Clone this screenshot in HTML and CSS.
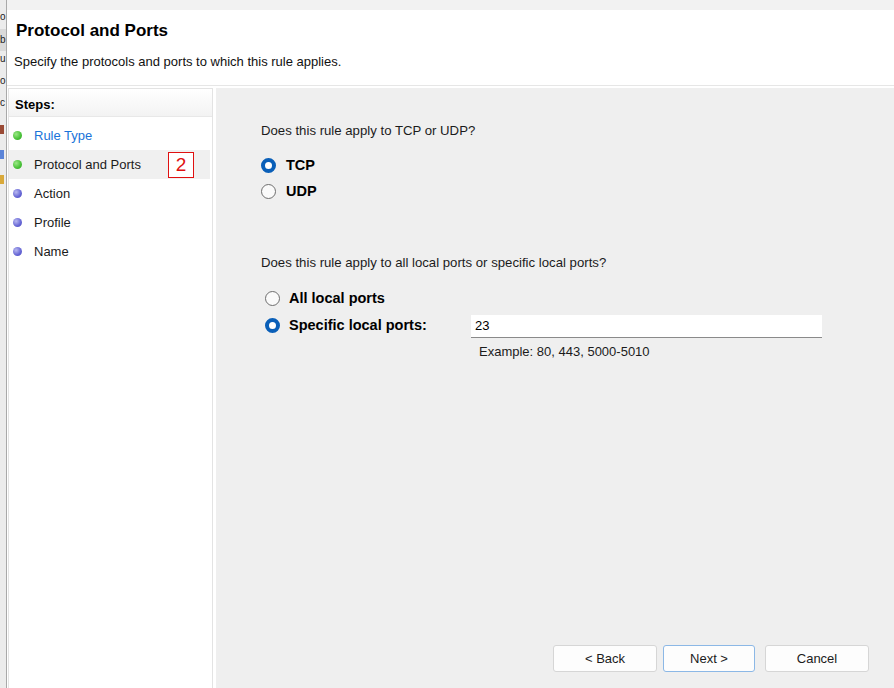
FILE: index.html
```html
<!DOCTYPE html>
<html>
<head>
<meta charset="utf-8">
<link rel="stylesheet" href="styles.css">
</head>
<body>
<div class="screen">
  <div class="behind">
    <span class="bl">o</span>
    <span class="bl sel">b</span>
    <span class="bl">u</span>
    <span class="bl">o</span>
    <span class="bl">c</span>
    <span class="bi brown"></span>
    <span class="bi blue"></span>
    <span class="bi yellow"></span>
  </div>
  <div class="dialog">
    <div class="topstrip"></div>
    <header class="head">
      <h1 class="title">Protocol and Ports</h1>
      <p class="subtitle">Specify the protocols and ports to which this rule applies.</p>
    </header>
    <div class="main">
      <aside class="steps">
        <div class="steps-head">Steps:</div>
        <ul class="step-list">
          <li class="step done link"><span class="dot green"></span>Rule Type</li>
          <li class="step current"><span class="dot green"></span>Protocol and Ports<span class="badge">2</span></li>
          <li class="step"><span class="dot purple"></span>Action</li>
          <li class="step"><span class="dot purple"></span>Profile</li>
          <li class="step"><span class="dot purple"></span>Name</li>
        </ul>
      </aside>
      <section class="content">
        <p class="question q1">Does this rule apply to TCP or UDP?</p>
        <div class="radios r1">
          <label class="radio"><span class="circle on"></span>TCP</label>
          <label class="radio"><span class="circle"></span>UDP</label>
        </div>
        <p class="question q2">Does this rule apply to all local ports or specific local ports?</p>
        <div class="radios r2">
          <label class="radio"><span class="circle"></span>All local ports</label>
          <div class="port-row">
            <label class="radio"><span class="circle on"></span>Specific local ports:</label>
            <div class="field">23</div>
          </div>
          <div class="example">Example: 80, 443, 5000-5010</div>
        </div>
        <div class="spacer"></div>
        <div class="buttons">
          <button class="btn back">&lt; Back</button>
          <button class="btn next">Next &gt;</button>
          <button class="btn cancel">Cancel</button>
        </div>
      </section>
    </div>
  </div>
</div>
</body>
</html>
```

FILE: styles.css
```css
* { box-sizing: border-box; }
html, body { margin: 0; padding: 0; }
body {
  width: 894px;
  height: 688px;
  overflow: hidden;
  font-family: "Liberation Sans", Arial, sans-serif;
  font-size: 13px;
  color: #1b1b1b;
  background: #ffffff;
}
.screen {
  display: flex;
  width: 894px;
  height: 688px;
}
.behind {
  width: 7px;
  flex: none;
  background: #ececec;
  border-right: 1px solid #a9a9a9;
  overflow: hidden;
  display: flex;
  flex-direction: column;
  padding-top: 9px;
  font-size: 10px;
  color: #222;
}
.bl {
  display: block;
  height: 22px;
  line-height: 16px;
  white-space: nowrap;
}
.bl.sel { background: #dadada; height: 22px; margin-top: -2px; padding-top: 3px; }
.bi {
  display: block;
  width: 4px;
  height: 9px;
  margin-top: 14px;
  margin-bottom: 2px;
}
.bi.brown { background: #9a4a35; margin-top: 8px; }
.bi.blue { background: #5b84d8; }
.bi.yellow { background: #d9a93a; }

.dialog {
  flex: 1;
  display: flex;
  flex-direction: column;
  min-width: 0;
  background: #ffffff;
}
.topstrip {
  height: 10px;
  background: #f2f2f2;
  flex: none;
}
.head {
  height: 76px;
  flex: none;
  padding: 11px 0 0 9px;
  border-bottom: 1px solid #e6e6e6;
}
.title {
  margin: 0;
  font-size: 17px;
  font-weight: bold;
  line-height: 20px;
  color: #000;
}
.subtitle {
  margin: 13px 0 0 -2px;
  font-size: 13px;
  line-height: 16px;
  color: #111;
}
.main {
  flex: 1;
  display: flex;
  padding-top: 2px;
  min-height: 0;
}
.steps {
  width: 205px;
  flex: none;
  margin-left: 1px;
  border: 1px solid #e3e3e3;
  border-bottom: none;
  background: #fff;
  margin-right: 3px;
}
.steps-head {
  height: 28px;
  padding: 8px 0 0 6px;
  font-weight: bold;
  font-size: 13px;
  line-height: 16px;
  color: #000;
  background: linear-gradient(#ffffff, #f3f3f3);
  border-bottom: 1px solid #e8e8e8;
}
.step-list {
  list-style: none;
  margin: 4px 0 0 0;
  padding: 0;
}
.step {
  display: flex;
  align-items: center;
  height: 29px;
  padding-left: 4px;
  font-size: 13px;
  color: #1b1b1b;
  position: relative;
}
.step.link { color: #1a73d9; }
.step.current { background: #f0f0f0; margin-right: 2px; }
.dot {
  width: 9px;
  height: 9px;
  border-radius: 50%;
  margin-right: 12px;
  flex: none;
}
.dot.green { background: radial-gradient(circle at 35% 35%, #9be886, #46c035 60%, #32a02a); }
.dot.purple { background: radial-gradient(circle at 35% 35%, #b8b8f0, #6464d4 60%, #5050c0); }
.badge {
  position: absolute;
  left: 159px;
  top: 2px;
  width: 26px;
  height: 26px;
  border: 1.5px solid #e01010;
  color: #e01010;
  font-size: 19px;
  line-height: 23px;
  text-align: center;
  background: #fff;
}

.content {
  flex: 1;
  background: #efefef;
  display: flex;
  flex-direction: column;
  padding: 35px 25px 16px 45px;
}
.question {
  margin: 0;
  font-size: 13.2px;
  line-height: 16px;
  color: #1b1b1b;
}
.radios {
  display: flex;
  flex-direction: column;
}
.r1 { margin-top: 19px; gap: 12px; }
.q2 { margin-top: 57px; }
.r2 { margin-top: 20px; padding-left: 4px; gap: 13px; }
.radio {
  display: flex;
  align-items: center;
  height: 14px;
  font-weight: bold;
  font-size: 14.5px;
  color: #000;
}
.circle {
  width: 15px;
  height: 15px;
  border-radius: 50%;
  border: 1px solid #6e6e6e;
  background: #fafafa;
  margin-right: 10px;
  flex: none;
}
.r2 .circle { margin-right: 9px; }
.circle.on {
  border: 4px solid #0a5fb8;
  background: #ffffff;
}
.port-row {
  display: flex;
  align-items: center;
  height: 14px;
}
.port-row .radio { width: 206px; }
.field {
  width: 351px;
  height: 23px;
  margin-top: 3px;
  background: #ffffff;
  border-bottom: 1px solid #8a8a8a;
  padding: 3px 0 0 4px;
  font-size: 13px;
  color: #000;
}
.example {
  margin: -1px 0 0 214px;
  font-size: 13px;
  color: #1b1b1b;
}
.spacer { flex: 1; }
.buttons {
  display: flex;
  justify-content: flex-end;
}
.btn {
  height: 27px;
  font-family: "Liberation Sans", Arial, sans-serif;
  font-size: 13px;
  color: #1b1b1b;
  background: #fdfdfd;
  border: 1px solid #d6d6d6;
  border-radius: 3px;
  padding: 0;
}
.back { width: 104px; }
.next { width: 92px; margin-left: 6px; border-color: #8cb8e6; }
.cancel { width: 104px; margin-left: 10px; }
```
